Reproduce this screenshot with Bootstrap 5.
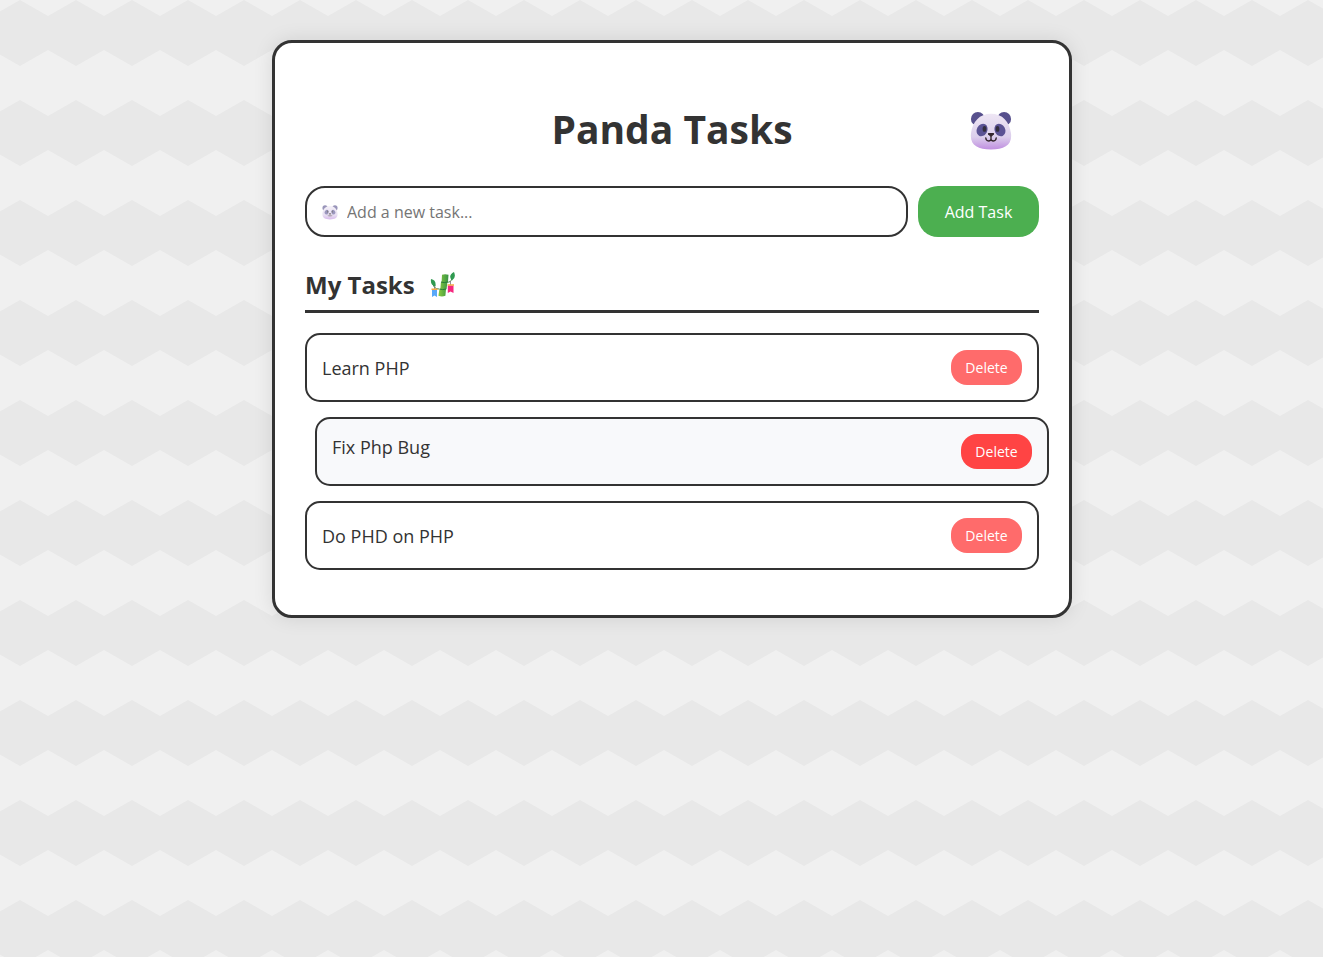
<!DOCTYPE html>
<html lang="en">
<head>
<meta charset="utf-8">
<meta name="viewport" content="width=device-width, initial-scale=1">
<title>Panda Tasks</title>
<link href="https://cdn.jsdelivr.net/npm/bootstrap@5.3.0/dist/css/bootstrap.min.css" rel="stylesheet">
<style>
:root { --ink: #333; }
body {
  font-family: "Comic Sans MS", "Open Sans", sans-serif;
  color: var(--ink);
  min-height: 100vh;
  padding: 40px 0 40px 21px;
  background: #f0f0f0 url("data:image/svg+xml,%3Csvg xmlns='http://www.w3.org/2000/svg' width='56' height='100'%3E%3Cpath d='M28 66L0 50V16L28 0l28 16v34z' fill='%23e8e8e8'/%3E%3C/svg%3E") -8px 0;
}
.board { max-width: 800px; padding: 30px 30px 45px; background: #fff; border: 3px solid var(--ink); border-radius: 20px; box-shadow: 0 0 20px rgba(0,0,0,.1); }
.board-head { padding-top: 28px; margin-bottom: 29px; }
.board-head h1 { font-size: 39px; line-height: 56px; font-weight: 700; }
.panda-face { width: 42px; height: 40px; margin: 4px 27px 0 0; }
.task-form { gap: 10px; margin-bottom: 30px; }
.task-input { height: 51px; border: 2px solid var(--ink); border-radius: 20px; padding: 0 15px 0 40px; font-size: 16px; color: var(--ink); }
.task-input::placeholder { color: #757575; }
.input-panda { left: 17px; top: 19px; width: 16px; height: 15px; opacity: .6; pointer-events: none; }
.add-btn { width: 121px; background: #4caf50; color: #fff; border: 0; border-radius: 20px; font-size: 16px; padding: 0; }
.add-btn:hover { background: #45a049; color: #fff; }
.list-title { font-size: 24px; line-height: 36px; font-weight: 700; padding-bottom: 7px; border-bottom: 3px solid var(--ink); margin-bottom: 20px; gap: 15px; }
.task-list { gap: 15px; }
.task-row { min-height: 69px; padding: 0 15px; border: 2px solid var(--ink); border-radius: 15px; background: #fff; font-size: 18px; line-height: 26px; }
.task-row.is-active { margin-left: 10px; margin-right: -10px; background: #f8f9fb; }
.task-row.is-active .task-name { padding-bottom: 10px; }
.delete-btn { width: 71px; height: 35px; padding: 0; border: 0; border-radius: 16px; background: #ff6b6b; color: #fff; font-size: 14px; }
.delete-btn:hover, .is-active .delete-btn { background: #ff4444; color: #fff; }
</style>
</head>
<body>
<svg class="position-absolute" width="0" height="0" aria-hidden="true">
  <defs>
    <linearGradient id="fur" x1="0" y1="0" x2="0" y2="1"><stop offset="0" stop-color="#eee6f4"/><stop offset=".65" stop-color="#dccfec"/><stop offset="1" stop-color="#c08fe0"/></linearGradient>
    <linearGradient id="stalk" x1="0" y1="0" x2="1" y2="0"><stop offset="0" stop-color="#8bc93f"/><stop offset="1" stop-color="#389444"/></linearGradient>
  </defs>
  <symbol id="panda" viewBox="0 0 40 38">
    <circle cx="7.5" cy="7.5" r="6.6" fill="#57508d"/><circle cx="32.5" cy="7.5" r="6.6" fill="#57508d"/>
    <path d="M20 2.500C31 2.500 37.500 10 39 21c1.500 11-6 15.500-19 15.500S-.5 32 1 21C2.500 10 9 2.500 20 2.500z" fill="url(#fur)"/>
    <ellipse cx="11.500" cy="18" rx="5" ry="6.200" transform="rotate(28 11.500 18)" fill="#5b5394"/>
    <ellipse cx="28.500" cy="18" rx="5" ry="6.200" transform="rotate(-28 28.500 18)" fill="#5b5394"/>
    <ellipse cx="13.800" cy="17" rx="1.800" ry="2.800" fill="#332d3d"/><ellipse cx="26.200" cy="17" rx="1.800" ry="2.800" fill="#332d3d"/>
    <path d="M17.500 21h5q.8.300.3 1.200L20.500 24.500h-1L17.200 22.200q-.5-.9.3-1.200z" fill="#33262d"/>
    <path d="M20 24.500v1.500M15 25.500q.2 3 2.700 3t2.300-2.500q-.2 2.500 2.300 2.500t2.700-3" fill="none" stroke="#33262d" stroke-width="1.300" stroke-linecap="round"/>
  </symbol>
  <symbol id="bamboo" viewBox="0 0 26 26">
    <path d="M9 17q-5 0-6-5M17 10q4 1 5-4" fill="none" stroke="#4b8b4b" stroke-width="1"/>
    <path d="M1 7q5.500 1 4.500 7.500Q0 13 1 7zM24 0q2.500 6-2 8.500-4.500-5 2-8.500z" fill="#2f9a50"/>
    <path d="M12 2.800q3-1 6.500 0l-.5 7-.7.700-.6 6-.7.700-.6 6.500q-3.500 1.500-7 0l1-6.500 1-.7.500-6 .7-.7z" fill="url(#stalk)"/>
    <path d="M11 10q3 1.200 6.800 0M9.500 17q3 1.200 6.800 0" fill="none" stroke="#277b35" stroke-width="1"/>
    <path d="M4.500 14v3M20.500 9v4" stroke="#777" stroke-width=".8"/>
    <path d="M2 18h5v7l-2.500-1.500L2 25z" fill="#58a8fa"/><path d="M17.800 13.500h5.700v7.500l-3-1.500-2.700 1.500z" fill="#f5277f"/>
    <path d="M1.500 16.500h6V18h-6zM17.500 12.300h6.500v1.400h-6.500z" fill="#f5a744"/>
  </symbol>
</svg>
<main class="board mx-auto">
  <header class="board-head row g-0 align-items-center">
    <div class="col"></div>
    <h1 class="col-auto mb-0">Panda Tasks</h1>
    <div class="col d-flex justify-content-end"><svg class="panda-face" role="img" aria-label="Panda"><use href="#panda"/></svg></div>
  </header>
  <form class="task-form d-flex">
    <div class="position-relative flex-grow-1">
      <input type="text" class="task-input form-control" placeholder="Add a new task..." aria-label="New task">
      <svg class="input-panda position-absolute" aria-hidden="true"><use href="#panda"/></svg>
    </div>
    <button type="button" class="btn add-btn">Add Task</button>
  </form>
  <h2 class="list-title d-flex align-items-center">My Tasks <svg width="26" height="26" aria-hidden="true"><use href="#bamboo"/></svg></h2>
  <ul class="task-list list-unstyled d-flex flex-column mb-0">
    <li class="task-row d-flex align-items-center justify-content-between"><span class="task-name">Learn PHP</span><button type="button" class="btn delete-btn">Delete</button></li>
    <li class="task-row is-active d-flex align-items-center justify-content-between"><span class="task-name">Fix Php Bug</span><button type="button" class="btn delete-btn">Delete</button></li>
    <li class="task-row d-flex align-items-center justify-content-between"><span class="task-name">Do PHD on PHP</span><button type="button" class="btn delete-btn">Delete</button></li>
  </ul>
</main>
<script src="https://cdn.jsdelivr.net/npm/bootstrap@5.3.0/dist/js/bootstrap.bundle.min.js"></script>
</body>
</html>
